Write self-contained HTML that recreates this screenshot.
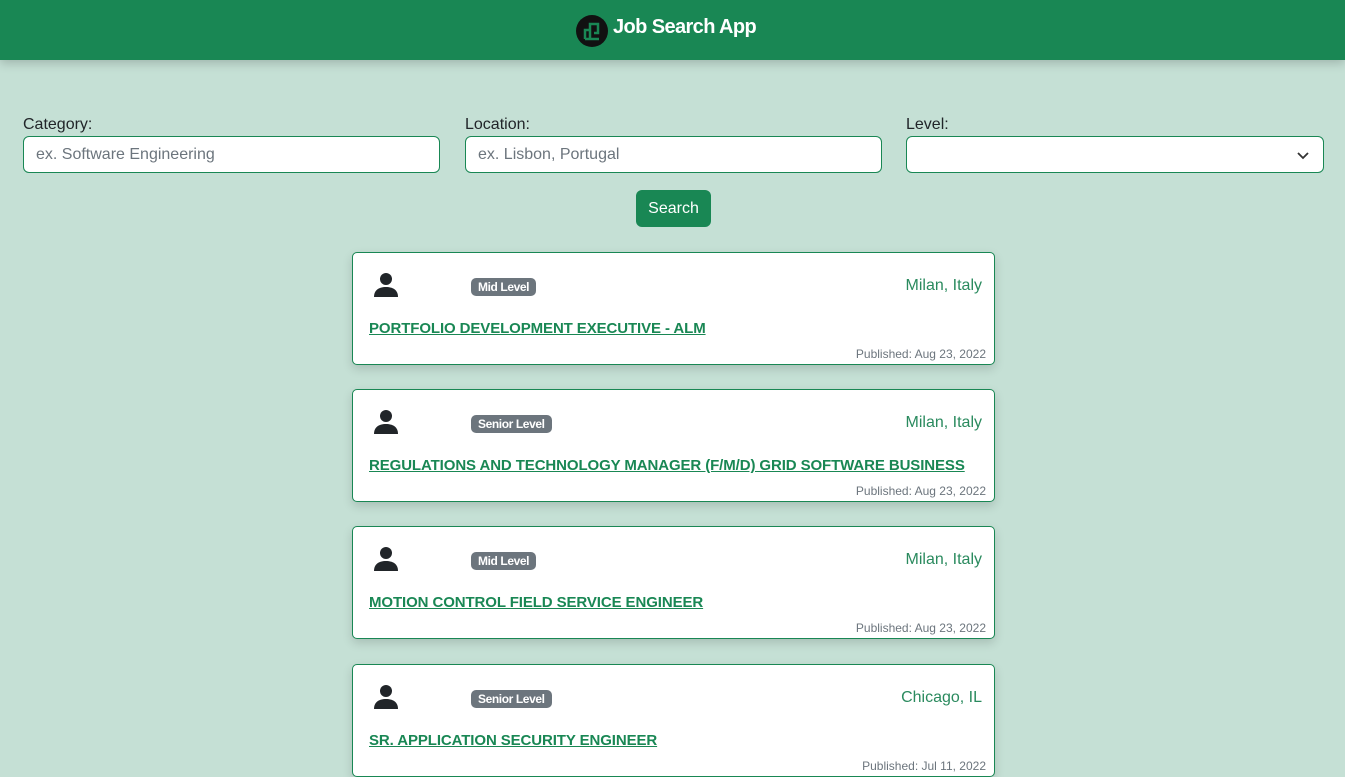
<!DOCTYPE html>
<html><head><style>
body{margin:0;background:#c5e0d5;font-family:"Liberation Sans",sans-serif;width:1345px;height:767px;overflow:hidden;position:relative}
.hdr{position:absolute;left:0;top:0;width:1345px;height:60px;background:#198754;box-shadow:0 3px 10px rgba(0,0,0,.2)}
.hdr .t{position:absolute;left:613px;top:16px;color:#fff;font-weight:bold;font-size:20px;letter-spacing:-0.6px}
.logo{position:absolute;left:576px;top:15px;width:32px;height:32px;border-radius:50%;background:#111}
.lbl{position:absolute;top:116px;font-size:16px;color:#212529}
.inp{position:absolute;top:136px;width:417px;height:37px;border:1px solid #198754;border-radius:6px;background:#fff;box-sizing:border-box;padding:9px 12px;font-size:16px;color:#6c757d}
.btn{position:absolute;left:636px;top:190px;width:75px;height:37px;background:#198754;border-radius:6px;color:#fff;font-size:16px;text-align:center;line-height:37px}
.card{position:absolute;left:352px;width:643px;height:113px;border:1px solid #198754;border-radius:5px;background:#fff;box-sizing:border-box;box-shadow:0 4px 10px rgba(0,0,0,.15)}
.badge{position:absolute;left:118px;top:25px;background:#6c757d;color:#fff;font-weight:bold;font-size:12px;padding:2px 7px;border-radius:5px;letter-spacing:-0.4px}
.loc{position:absolute;right:12px;top:24px;font-size:16px;color:#2a8a5e}
.ttl{position:absolute;left:16px;top:67px;font-size:15px;font-weight:bold;color:#198754;text-decoration:underline;letter-spacing:-0.1px}
.pub{position:absolute;right:8px;top:94px;font-size:12px;color:#6c757d}
.ic{position:absolute;left:20px;top:18px}
</style></head><body>
<div class="hdr"><div class="logo"><svg width="32" height="32" viewBox="0 0 32 32"><path d="M9 24V15h5v9M14 15V9h8v9h-4M9 24h14" stroke="#198754" stroke-width="2.5" fill="none"/></svg></div><div class="t">Job Search App</div></div>
<div class="lbl" style="left:23px">Category:</div>
<div class="lbl" style="left:465px">Location:</div>
<div class="lbl" style="left:906px">Level:</div>
<div class="inp" style="left:23px">ex. Software Engineering</div>
<div class="inp" style="left:465px">ex. Lisbon, Portugal</div>
<div class="inp" style="left:906px;width:418px"><svg style="position:absolute;right:14px;top:14px" width="12" height="9" viewBox="0 0 12 9"><path d="M1 2l5 5 5-5" stroke="#333" stroke-width="1.8" fill="none"/></svg></div>
<div class="btn">Search</div>

<div class="card" style="top:252px"><svg class="ic" width="26" height="26" viewBox="0 0 26 26"><circle cx="13" cy="8" r="6" fill="#212529"/><path d="M1 26c0-7 5-10 12-10s12 3 12 10z" fill="#212529"/></svg><span class="badge">Mid Level</span><span class="loc">Milan, Italy</span><span class="ttl">PORTFOLIO DEVELOPMENT EXECUTIVE - ALM</span><span class="pub">Published: Aug 23, 2022</span></div>
<div class="card" style="top:389px"><svg class="ic" width="26" height="26" viewBox="0 0 26 26"><circle cx="13" cy="8" r="6" fill="#212529"/><path d="M1 26c0-7 5-10 12-10s12 3 12 10z" fill="#212529"/></svg><span class="badge">Senior Level</span><span class="loc">Milan, Italy</span><span class="ttl">REGULATIONS AND TECHNOLOGY MANAGER (F/M/D) GRID SOFTWARE BUSINESS</span><span class="pub">Published: Aug 23, 2022</span></div>
<div class="card" style="top:526px"><svg class="ic" width="26" height="26" viewBox="0 0 26 26"><circle cx="13" cy="8" r="6" fill="#212529"/><path d="M1 26c0-7 5-10 12-10s12 3 12 10z" fill="#212529"/></svg><span class="badge">Mid Level</span><span class="loc">Milan, Italy</span><span class="ttl">MOTION CONTROL FIELD SERVICE ENGINEER</span><span class="pub">Published: Aug 23, 2022</span></div>
<div class="card" style="top:664px"><svg class="ic" width="26" height="26" viewBox="0 0 26 26"><circle cx="13" cy="8" r="6" fill="#212529"/><path d="M1 26c0-7 5-10 12-10s12 3 12 10z" fill="#212529"/></svg><span class="badge">Senior Level</span><span class="loc">Chicago, IL</span><span class="ttl">SR. APPLICATION SECURITY ENGINEER</span><span class="pub">Published: Jul 11, 2022</span></div>
</body></html>
